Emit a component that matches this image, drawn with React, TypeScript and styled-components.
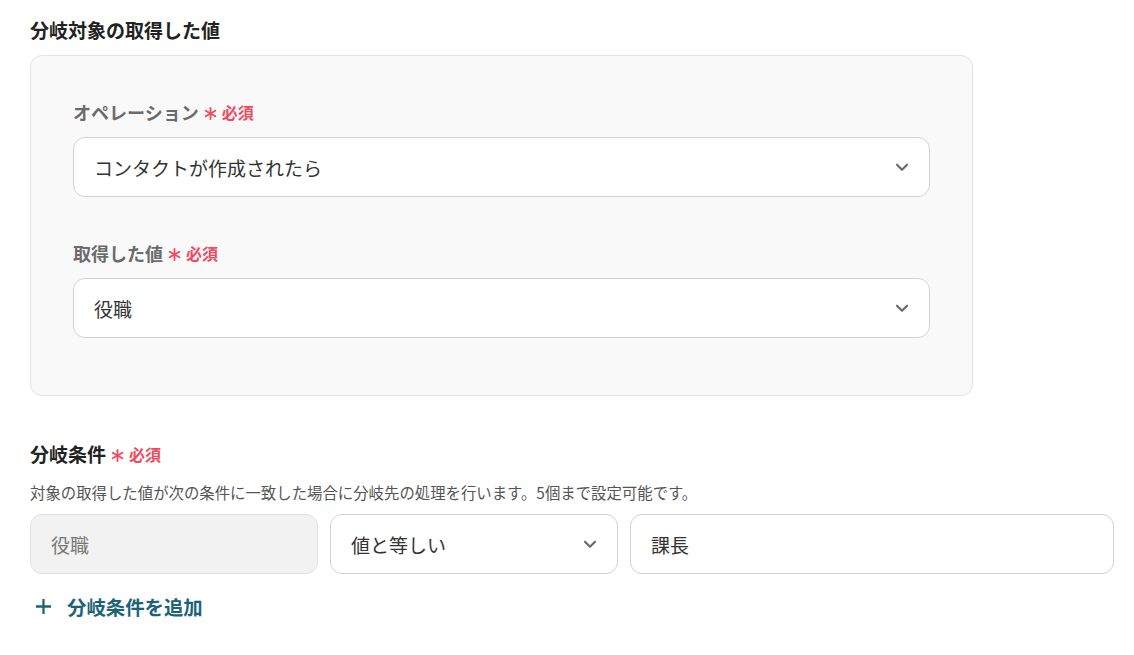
import React from "react";
import styled, { createGlobalStyle } from "styled-components";

const GlobalStyle = createGlobalStyle`
  body {
    margin: 0;
    background: #ffffff;
    font-family: "Noto Sans CJK JP", "Noto Sans", sans-serif;
    color: #2b2b2b;
  }
`;

const Chevron = () => (
  <svg width="16" height="16" viewBox="0 0 24 24" fill="none">
    <path
      d="M4.5 8.5l7.5 7.5 7.5-7.5"
      stroke="#6a6a6a"
      strokeWidth="3.2"
      strokeLinecap="round"
      strokeLinejoin="round"
    />
  </svg>
);

// six-armed asterisk in front of "必須"
const Asterisk = () => (
  <svg width="13" height="13" viewBox="0 0 14 14">
    <g stroke="#f04a5e" strokeWidth="2" strokeLinecap="round">
      <path d="M7 1v12" />
      <path d="M1.8 4l10.4 6" />
      <path d="M1.8 10l10.4-6" />
    </g>
  </svg>
);

const Required = () => (
  <Req>
    <Asterisk />
    必須
  </Req>
);

export default function App() {
  return (
    <>
      <GlobalStyle />
      <Page>
        <SectionTitle>分岐対象の取得した値</SectionTitle>
        <Panel>
          <Field>
            <Label>
              オペレーション
              <Required />
            </Label>
            <Select>
              <span>コンタクトが作成されたら</span>
              <Chevron />
            </Select>
          </Field>
          <Field>
            <Label>
              取得した値
              <Required />
            </Label>
            <Select>
              <span>役職</span>
              <Chevron />
            </Select>
          </Field>
        </Panel>

        <SectionTitle $mt={44}>
          分岐条件
          <Required />
        </SectionTitle>
        <Help>
          対象の取得した値が次の条件に一致した場合に分岐先の処理を行います。5個まで設定可能です。
        </Help>
        <CondRow>
          <Box $variant="disabled">役職</Box>
          <Box>
            <span>値と等しい</span>
            <Chevron />
          </Box>
          <Box>課長</Box>
        </CondRow>
        <AddButton>
          <svg width="17" height="17" viewBox="0 0 18 18">
            <path d="M9 1v16M1 9h16" stroke="#1b6377" strokeWidth="2.4" />
          </svg>
          分岐条件を追加
        </AddButton>
      </Page>
    </>
  );
}

const Page = styled.div`
  padding: 16px 20px 30px 30px;
`;

const SectionTitle = styled.div<{ $mt?: number }>`
  display: flex;
  align-items: center;
  margin-top: ${({ $mt }) => $mt || 0}px;
  font-size: 19px;
  font-weight: 700;
  color: #222;
  line-height: 28px;
`;

const Panel = styled.div`
  width: 857px;
  margin-top: 11px;
  padding: 43px 42px 57px 42px;
  background: #f9f9f9;
  border: 1px solid #e3e3e3;
  border-radius: 12px;
  display: flex;
  flex-direction: column;
  gap: 43px;
`;

const Field = styled.div`
  display: flex;
  flex-direction: column;
  gap: 12px;
`;

const Label = styled.div`
  display: flex;
  align-items: center;
  font-size: 18px;
  font-weight: 700;
  color: #6b6b6b;
  line-height: 26px;
`;

const Req = styled.span`
  display: inline-flex;
  align-items: center;
  gap: 5px;
  margin-left: 5px;
  font-size: 16px;
  font-weight: 700;
  color: #f04a5e;

  svg {
    margin-top: 2px;
  }
`;

const Select = styled.div`
  height: 60px;
  box-sizing: border-box;
  padding: 0 19px 0 20px;
  display: flex;
  align-items: center;
  justify-content: space-between;
  background: #fff;
  border: 1px solid #cfd3d8;
  border-radius: 12px;
  font-size: 19px;
  color: #333;
`;

const Help = styled.div`
  margin-top: 14px;
  font-size: 15.4px;
  color: #555;
  line-height: 20px;
`;

const CondRow = styled.div`
  margin-top: 12px;
  display: grid;
  grid-template-columns: 288px 288px 484px;
  gap: 12px;
`;

const Box = styled.div<{ $variant?: "disabled" }>`
  height: 60px;
  box-sizing: border-box;
  padding: 0 19px 0 20px;
  display: flex;
  align-items: center;
  justify-content: space-between;
  border-radius: 12px;
  font-size: 19px;
  border: 1px solid ${({ $variant }) => ($variant ? "#e2e2e2" : "#cfd3d8")};
  background: ${({ $variant }) => ($variant ? "#f2f2f2" : "#fff")};
  color: ${({ $variant }) => ($variant ? "#777" : "#333")};
`;

const AddButton = styled.div`
  margin-top: 18px;
  display: flex;
  align-items: center;
  gap: 15px;
  padding-left: 5px;
  font-size: 19.4px;
  font-weight: 700;
  color: #1b6377;
`;
